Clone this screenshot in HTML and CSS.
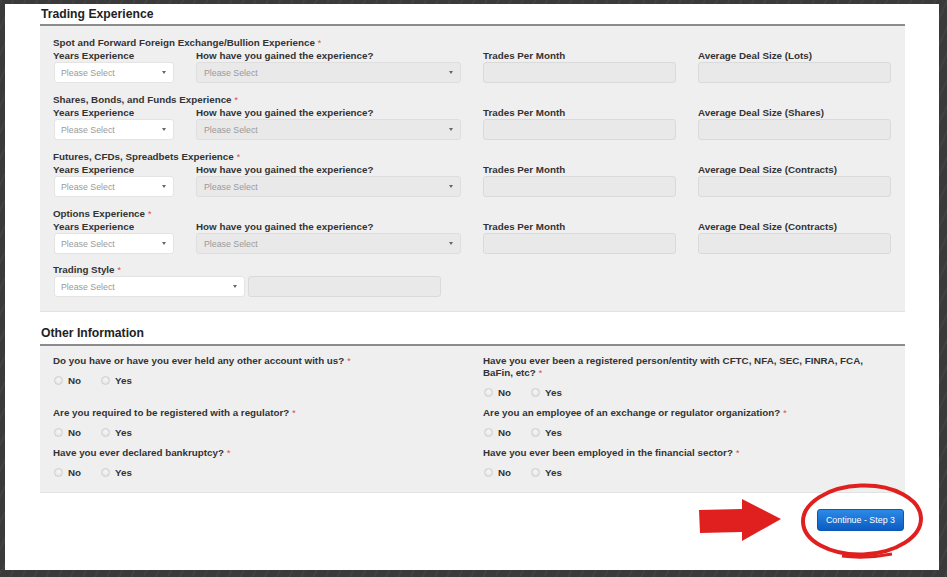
FILE: index.html
```html
<!DOCTYPE html>
<html lang="en">
<head>
<meta charset="utf-8">
<title>Trading Experience</title>
<link rel="stylesheet" href="styles.css">
</head>
<body>
<div class="page">
  <section class="section">
    <h2 class="section-title">Trading Experience</h2>
    <div class="section-body exp">
      <div class="group">
        <div class="group-title">Spot and Forward Foreign Exchange/Bullion Experience <span class="req">*</span></div>
        <div class="grid4">
          <label>Years Experience</label>
          <label>How have you gained the experience?</label>
          <label>Trades Per Month</label>
          <label>Average Deal Size (Lots)</label>
          <div class="select"><span>Please Select</span><i class="caret"></i></div>
          <div class="select disabled"><span>Please Select</span><i class="caret"></i></div>
          <div class="input"></div>
          <div class="input"></div>
        </div>
      </div>
      <div class="group">
        <div class="group-title">Shares, Bonds, and Funds Experience <span class="req">*</span></div>
        <div class="grid4">
          <label>Years Experience</label>
          <label>How have you gained the experience?</label>
          <label>Trades Per Month</label>
          <label>Average Deal Size (Shares)</label>
          <div class="select"><span>Please Select</span><i class="caret"></i></div>
          <div class="select disabled"><span>Please Select</span><i class="caret"></i></div>
          <div class="input"></div>
          <div class="input"></div>
        </div>
      </div>
      <div class="group">
        <div class="group-title">Futures, CFDs, Spreadbets Experience <span class="req">*</span></div>
        <div class="grid4">
          <label>Years Experience</label>
          <label>How have you gained the experience?</label>
          <label>Trades Per Month</label>
          <label>Average Deal Size (Contracts)</label>
          <div class="select"><span>Please Select</span><i class="caret"></i></div>
          <div class="select disabled"><span>Please Select</span><i class="caret"></i></div>
          <div class="input"></div>
          <div class="input"></div>
        </div>
      </div>
      <div class="group">
        <div class="group-title">Options Experience <span class="req">*</span></div>
        <div class="grid4">
          <label>Years Experience</label>
          <label>How have you gained the experience?</label>
          <label>Trades Per Month</label>
          <label>Average Deal Size (Contracts)</label>
          <div class="select"><span>Please Select</span><i class="caret"></i></div>
          <div class="select disabled"><span>Please Select</span><i class="caret"></i></div>
          <div class="input"></div>
          <div class="input"></div>
        </div>
      </div>
      <div class="group last">
        <div class="group-title">Trading Style <span class="req">*</span></div>
        <div class="style-row">
          <div class="select wide"><span>Please Select</span><i class="caret"></i></div>
          <div class="input style-input"></div>
        </div>
      </div>
    </div>
  </section>

  <section class="section other">
    <h2 class="section-title">Other Information</h2>
    <div class="section-body">
      <div class="grid2">
        <div class="question">
          <div class="q">Do you have or have you ever held any other account with us? <span class="req">*</span></div>
          <div class="radios"><span class="radio"><i class="dot"></i>No</span><span class="radio"><i class="dot"></i>Yes</span></div>
        </div>
        <div class="question">
          <div class="q">Have you ever been a registered person/entity with CFTC, NFA, SEC, FINRA, FCA,<br>BaFin, etc? <span class="req">*</span></div>
          <div class="radios"><span class="radio"><i class="dot"></i>No</span><span class="radio"><i class="dot"></i>Yes</span></div>
        </div>
        <div class="question">
          <div class="q">Are you required to be registered with a regulator? <span class="req">*</span></div>
          <div class="radios"><span class="radio"><i class="dot"></i>No</span><span class="radio"><i class="dot"></i>Yes</span></div>
        </div>
        <div class="question">
          <div class="q">Are you an employee of an exchange or regulator organization? <span class="req">*</span></div>
          <div class="radios"><span class="radio"><i class="dot"></i>No</span><span class="radio"><i class="dot"></i>Yes</span></div>
        </div>
        <div class="question">
          <div class="q">Have you ever declared bankruptcy? <span class="req">*</span></div>
          <div class="radios"><span class="radio"><i class="dot"></i>No</span><span class="radio"><i class="dot"></i>Yes</span></div>
        </div>
        <div class="question">
          <div class="q">Have you ever been employed in the financial sector? <span class="req">*</span></div>
          <div class="radios"><span class="radio"><i class="dot"></i>No</span><span class="radio"><i class="dot"></i>Yes</span></div>
        </div>
      </div>
    </div>
  </section>

  <div class="footer">
    <svg class="arrow" width="83" height="44" viewBox="0 0 83 44">
      <polygon points="0,12 43,11 43,1 82,21 43,43 43,34 1,35" fill="#e01f1f"/>
    </svg>
    <div class="btn-wrap">
      <button class="btn" type="button">Continue - Step 3</button>
      <svg class="circle" width="126" height="78" viewBox="0 0 126 78">
        <ellipse cx="62" cy="37" rx="59" ry="34.5" fill="none" stroke="#e01f1f" stroke-width="4" transform="rotate(-2 62 37)"/>
        <path d="M42 73 Q66 76 92 71" fill="none" stroke="#e01f1f" stroke-width="3"/>
      </svg>
    </div>
  </div>
</div>
</body>
</html>
```

FILE: styles.css
```css
html, body {
  margin: 0;
  padding: 0;
}

body {
  background-color: #3a3a3a;
  background-image: repeating-linear-gradient(115deg, rgba(255,255,255,0.035) 0 2px, transparent 2px 11px);
  font-family: "Liberation Sans", Arial, sans-serif;
  color: #333;
}

.page {
  margin: 4px 8px 0 5px;
  height: 566px;
  box-sizing: border-box;
  background: #fff;
  padding: 3px 34px 0 35px;
}

.section-title {
  margin: 0;
  padding: 0 0 3px 1px;
  font-size: 12.2px;
  line-height: 14px;
  font-weight: bold;
  color: #222;
  border-bottom: 2px solid #8b8b8b;
}

.section-body {
  background: #efefef;
  border-bottom: 1px solid #e2e2e2;
  padding: 10px 14px 14px 13px;
}

.other {
  margin-top: 14px;
}

.other .section-title {
  padding-bottom: 4px;
}

.other .section-body {
  padding: 9px 14px 13px 13px;
}

.group {
  margin-bottom: 10px;
}

.group.last {
  margin-bottom: 0;
  margin-top: -1px;
}

.group-title {
  font-size: 9.8px;
  line-height: 13px;
  font-weight: bold;
  color: #333;
}

.req {
  color: #e0504d;
  font-weight: normal;
}

.grid4 {
  display: grid;
  grid-template-columns: 121px 265px 193px 193px;
  column-gap: 22px;
}

.grid4 label {
  font-size: 9.8px;
  line-height: 13px;
  font-weight: bold;
  color: #333;
}

.select {
  height: 21px;
  box-sizing: border-box;
  background: #fff;
  border: 1px solid #e4e4e4;
  border-radius: 3px;
  display: flex;
  align-items: center;
  justify-content: space-between;
  padding: 0 7px 0 6px;
  font-size: 8.8px;
  color: #9a9a9a;
  margin-left: 1px;
}

.select.disabled {
  background: #e9e9e9;
  border-color: #dedede;
  padding-left: 7px;
  margin-left: 0;
}

.caret {
  width: 0;
  height: 0;
  border-left: 2.5px solid transparent;
  border-right: 2.5px solid transparent;
  border-top: 3.5px solid #666;
}

.input {
  height: 21px;
  box-sizing: border-box;
  background: #e9e9e9;
  border: 1px solid #dadada;
  border-radius: 3px;
}

.style-row {
  display: flex;
  gap: 3px;
}

.select.wide {
  width: 191px;
}

.style-input {
  width: 193px;
}

.grid2 {
  display: grid;
  grid-template-columns: 408px 408px;
  column-gap: 22px;
  row-gap: 8px;
}

.q {
  font-size: 9.8px;
  line-height: 12px;
  font-weight: bold;
  color: #333;
  margin-bottom: 7px;
}

.radios {
  display: flex;
  align-items: center;
  height: 13px;
  font-size: 9.8px;
  font-weight: bold;
  color: #333;
}

.radio {
  display: flex;
  align-items: center;
  gap: 5px;
  margin-right: 19px;
}

.dot {
  width: 9px;
  height: 9px;
  box-sizing: border-box;
  border-radius: 50%;
  border: 1px solid #cfcfcf;
  background: radial-gradient(circle at 50% 40%, #f7f7f7, #dddddd);
  margin-left: 1px;
}

.footer {
  display: flex;
  justify-content: flex-end;
  align-items: center;
  margin-top: 5px;
  padding-right: 1px;
}

.arrow {
  display: block;
  margin-right: 35px;
}

.btn-wrap {
  position: relative;
}

.btn {
  display: block;
  width: 87px;
  height: 22px;
  margin: 0;
  padding: 0;
  border: 1px solid #0a57b8;
  border-radius: 3px;
  background: linear-gradient(#2c8ae6, #0b5cc3);
  color: #fff;
  font-family: "Liberation Sans", Arial, sans-serif;
  font-size: 8.9px;
}

.circle {
  position: absolute;
  left: -17px;
  top: -26px;
  pointer-events: none;
}
```
